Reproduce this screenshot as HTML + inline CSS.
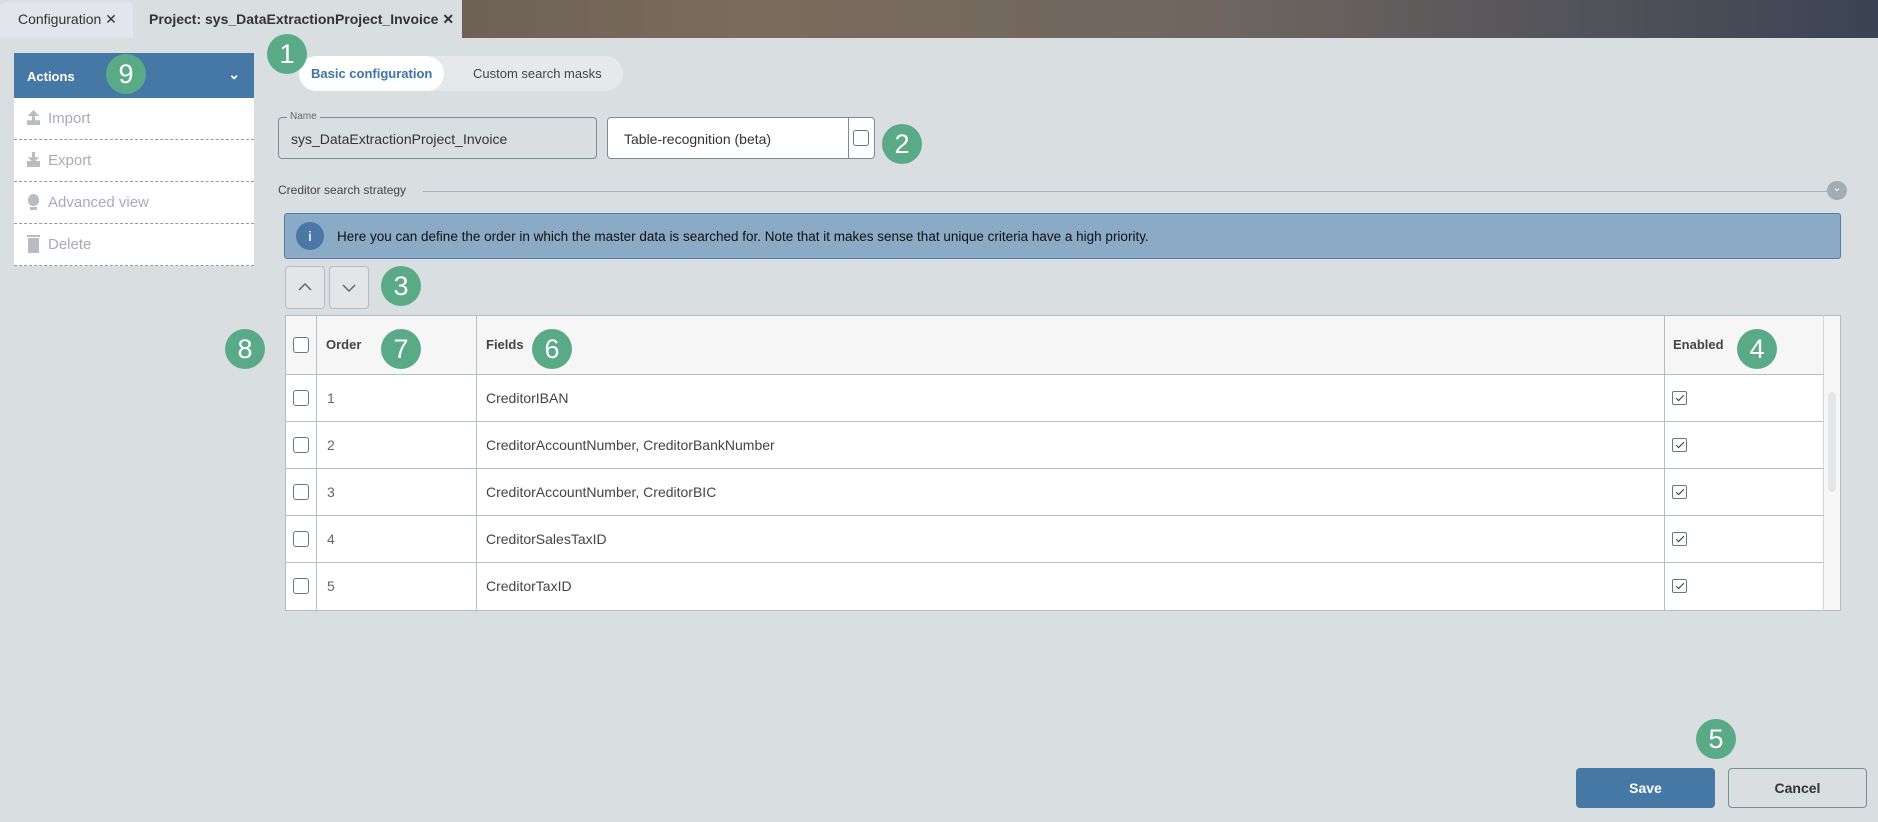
<!DOCTYPE html>
<html><head><meta charset="utf-8"><style>
*{box-sizing:border-box;margin:0;padding:0}
body{width:1878px;height:822px;background:#d9dee1;font-family:"Liberation Sans",sans-serif;position:relative;overflow:hidden;color:#333}
.a{position:absolute;white-space:nowrap}
.badge{position:absolute;width:40px;height:40px;margin:-20px 0 0 -20px;background:#5aaa88;color:#fff;border-radius:50%;text-align:center;line-height:40px;font-size:27px}
.cb{position:absolute;width:16px;height:16px;border:1.5px solid #6b7685;border-radius:3px;background:#fff}
.en{position:absolute;left:1672px;width:15px;height:14px;border:1px solid #6b7685;border-radius:2px;background:#fff}
.en:after{content:"";position:absolute;left:3px;top:3px;width:7px;height:3px;border-left:1px solid #334;border-bottom:1px solid #334;transform:rotate(-45deg)}
.item{position:absolute;left:14px;width:240px;height:42px;background:#fff;border-bottom:1px dashed #999;color:#aab;font-size:15px;padding:12px 0 0 34px;white-space:nowrap}
.ico{position:absolute;left:27px;background:#b8bcc3}
.hl{position:absolute;left:286px;width:1538px;height:1px;background:#b5bcc4}
.t{position:absolute;font-size:14px;color:#444;white-space:nowrap}
</style></head><body>
<div class="a" style="left:0;top:0;width:1878px;height:38px;background:linear-gradient(90deg,#5a534c 0%,#7a6c5c 40%,#6f6660 65%,#3b4354 100%)"></div>
<div class="a" style="left:0;top:0;width:462px;height:38px;background:#d9dee1"></div>
<div class="a" style="left:0;top:2px;width:133px;height:36px;background:#e3e5ed;border-radius:6px 6px 0 0;font-size:14px;color:#333;padding:9px 0 0 18px">Configuration ✕</div>
<div class="a" style="left:135px;top:0;width:326px;height:38px;background:#d9dee1;border-radius:6px 6px 0 0;font-size:14px;font-weight:bold;padding:11px 0 0 14px;color:#333">Project: sys_DataExtractionProject_Invoice ✕</div>

<div class="a" style="left:14px;top:53px;width:240px;height:45px;background:#4678a6;color:#fff;font-weight:bold;font-size:13px;padding:16px 0 0 13px">Actions<span style="position:absolute;right:14px;top:13px;font-size:14px">⌄</span></div>
<div class="item" style="top:98px">Import</div>
<div class="item" style="top:140px">Export</div>
<div class="item" style="top:182px">Advanced view</div>
<div class="item" style="top:224px">Delete</div>
<div class="ico" style="top:110px;width:13px;height:15px;clip-path:polygon(50% 0,95% 40%,62% 40%,62% 68%,100% 68%,100% 100%,0 100%,0 68%,38% 68%,38% 40%,5% 40%)"></div>
<div class="ico" style="top:152px;width:13px;height:15px;clip-path:polygon(38% 0,62% 0,62% 35%,95% 35%,50% 72%,5% 35%,38% 35%)"></div>
<div class="ico" style="top:161px;width:13px;height:6px"></div>
<div class="ico" style="top:194px;left:28px;width:11px;height:12px;border-radius:50% 50% 45% 45%"></div>
<div class="ico" style="top:207px;left:30px;width:7px;height:3px"></div>
<div class="ico" style="top:235px;width:13px;height:2px"></div>
<div class="ico" style="top:238px;left:28px;width:11px;height:15px"></div>

<div class="a" style="left:299px;top:56px;width:324px;height:35px;background:#e6e9ec;border-radius:18px"></div>
<div class="a" style="left:299px;top:56px;width:145px;height:35px;background:#fff;border-radius:18px;color:#3f74a7;font-weight:bold;font-size:13px;padding:10px 0 0 12px">Basic configuration</div>
<div class="a" style="left:473px;top:66px;font-size:13px;color:#444">Custom search masks</div>

<div class="a" style="left:278px;top:117px;width:319px;height:42px;border:1px solid #7d8a99;border-radius:4px;font-size:14px;padding:13px 0 0 12px">sys_DataExtractionProject_Invoice</div>
<div class="a" style="left:287px;top:111px;background:#d9dee1;padding:0 3px;font-size:10px;color:#666">Name</div>
<div class="a" style="left:607px;top:117px;width:268px;height:42px;border:1px solid #7d8a99;border-radius:4px;background:#fff;font-size:14px;padding:13px 0 0 16px">Table-recognition (beta)</div>
<div class="a" style="left:848px;top:117px;width:1px;height:42px;background:#7d8a99"></div>
<div class="cb" style="left:853px;top:130px"></div>

<div class="a" style="left:278px;top:183px;font-size:12px;color:#444">Creditor search strategy</div>
<div class="a" style="left:423px;top:191px;width:1405px;height:1px;background:#a8aeb6"></div>
<div class="a" style="left:1827px;top:181px;width:20px;height:19px;border-radius:50%;background:#a3acb5;color:#fff;font-size:11px;text-align:center;line-height:14px">⌄</div>

<div class="a" style="left:284px;top:213px;width:1557px;height:46px;background:#8aaac5;border:1px solid #4f7fad;border-radius:3px;font-size:13.5px;color:#111;padding:15px 0 0 52px">Here you can define the order in which the master data is searched for. Note that it makes sense that unique criteria have a high priority.</div>
<div class="a" style="left:296px;top:222px;width:28px;height:28px;border-radius:50%;background:#4a77a5;color:#dde;font-weight:bold;font-size:14px;text-align:center;line-height:28px">i</div>

<div class="a" style="left:285px;top:266px;width:40px;height:43px;border:1px solid #b5bcc4;border-radius:4px;background:#e2e6e9"></div>
<div class="a" style="left:329px;top:266px;width:40px;height:43px;border:1px solid #b5bcc4;border-radius:4px;background:#e2e6e9"></div>
<svg class="a" style="left:285px;top:266px" width="84" height="43"><path d="M14 24l6-6 6 6M58 19l6 6 6-6" stroke="#666" stroke-width="1.5" fill="none"/></svg>

<div class="a" style="left:285px;top:315px;width:1556px;height:296px;border:1px solid #b5bcc4;background:#fff"></div>
<div class="a" style="left:286px;top:316px;width:1554px;height:58px;background:#f6f6f6"></div>
<div class="a" style="left:1824px;top:374px;width:16px;height:236px;background:#f6f6f6"></div>
<div class="a" style="left:1828px;top:392px;width:8px;height:100px;background:#e4e6e8;border-radius:4px"></div>
<div class="hl" style="top:374px"></div><div class="hl" style="top:421px"></div><div class="hl" style="top:468px"></div><div class="hl" style="top:515px"></div><div class="hl" style="top:562px"></div>
<div class="a" style="left:316px;top:315px;width:1px;height:296px;background:#b5bcc4"></div>
<div class="a" style="left:476px;top:315px;width:1px;height:296px;background:#b5bcc4"></div>
<div class="a" style="left:1664px;top:315px;width:1px;height:296px;background:#b5bcc4"></div>
<div class="a" style="left:1823px;top:315px;width:1px;height:296px;background:#d0d4d8"></div>

<div class="cb" style="left:293px;top:337px"></div>
<div class="t" style="left:326px;top:337px;font-weight:bold;font-size:13px">Order</div>
<div class="t" style="left:486px;top:337px;font-weight:bold;font-size:13px">Fields</div>
<div class="t" style="left:1673px;top:337px;font-weight:bold;font-size:13px">Enabled</div>

<div class="cb" style="left:293px;top:390px"></div><div class="t" style="left:327px;top:390px;color:#666">1</div><div class="t" style="left:486px;top:390px">CreditorIBAN</div><div class="en" style="top:391px"></div>
<div class="cb" style="left:293px;top:437px"></div><div class="t" style="left:327px;top:437px;color:#666">2</div><div class="t" style="left:486px;top:437px">CreditorAccountNumber, CreditorBankNumber</div><div class="en" style="top:438px"></div>
<div class="cb" style="left:293px;top:484px"></div><div class="t" style="left:327px;top:484px;color:#666">3</div><div class="t" style="left:486px;top:484px">CreditorAccountNumber, CreditorBIC</div><div class="en" style="top:485px"></div>
<div class="cb" style="left:293px;top:531px"></div><div class="t" style="left:327px;top:531px;color:#666">4</div><div class="t" style="left:486px;top:531px">CreditorSalesTaxID</div><div class="en" style="top:532px"></div>
<div class="cb" style="left:293px;top:578px"></div><div class="t" style="left:327px;top:578px;color:#666">5</div><div class="t" style="left:486px;top:578px">CreditorTaxID</div><div class="en" style="top:579px"></div>

<div class="a" style="left:1576px;top:768px;width:139px;height:40px;background:#4678a6;border-radius:4px;color:#fff;font-weight:bold;font-size:14px;text-align:center;line-height:40px">Save</div>
<div class="a" style="left:1728px;top:768px;width:139px;height:40px;border:1px solid #7d8a99;border-radius:4px;color:#333;font-weight:bold;font-size:14px;text-align:center;line-height:38px">Cancel</div>

<div class="badge" style="left:126px;top:74px">9</div>
<div class="badge" style="left:287px;top:54px">1</div>
<div class="badge" style="left:902px;top:144px">2</div>
<div class="badge" style="left:401px;top:286px">3</div>
<div class="badge" style="left:245px;top:349px">8</div>
<div class="badge" style="left:401px;top:349px">7</div>
<div class="badge" style="left:552px;top:349px">6</div>
<div class="badge" style="left:1757px;top:349px">4</div>
<div class="badge" style="left:1716px;top:739px">5</div>
</body></html>
